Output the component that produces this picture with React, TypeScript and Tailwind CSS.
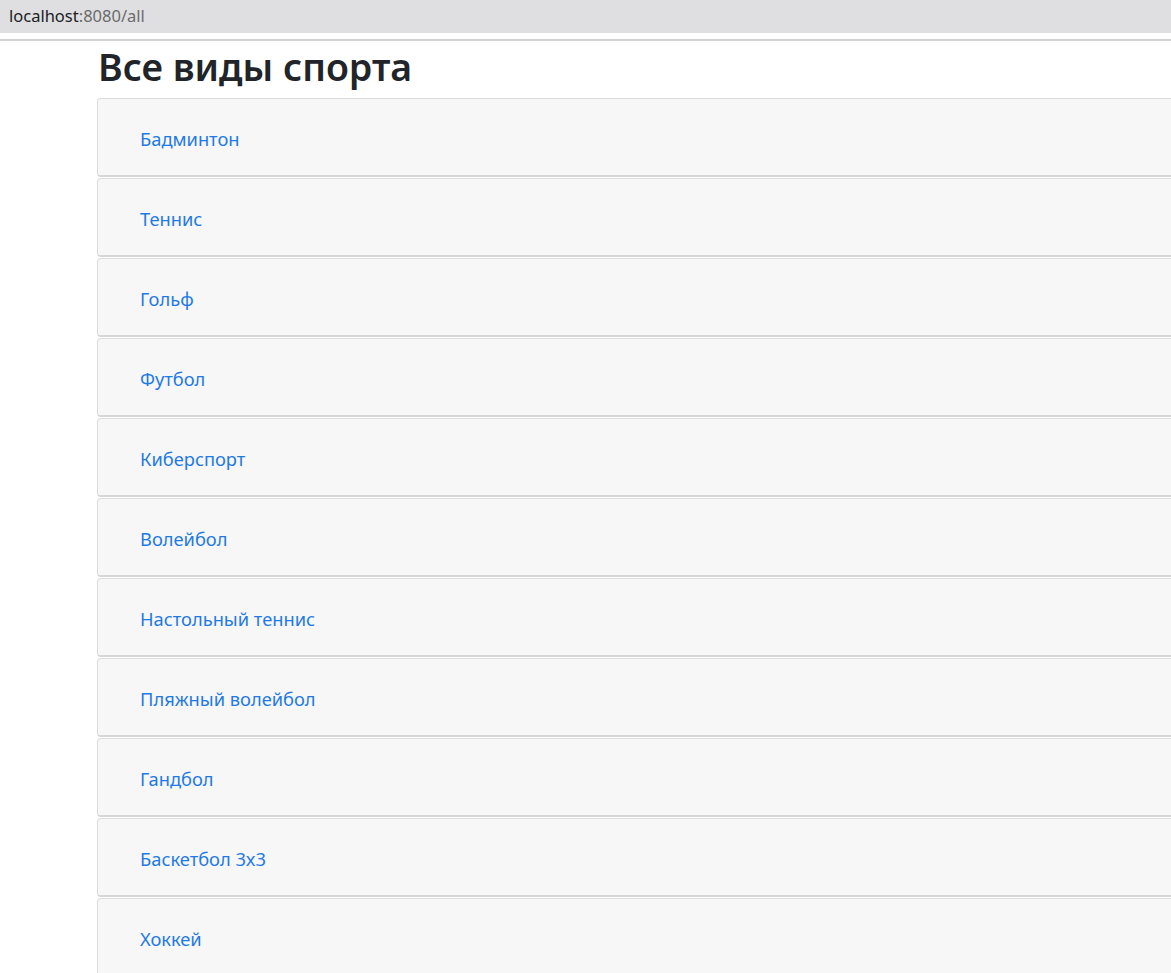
import React from "react";

const sports = [
  "Бадминтон",
  "Теннис",
  "Гольф",
  "Футбол",
  "Киберспорт",
  "Волейбол",
  "Настольный теннис",
  "Пляжный волейбол",
  "Гандбол",
  "Баскетбол 3x3",
  "Хоккей",
];

const App = () => {
  return (
    <div className="min-h-screen bg-white overflow-hidden" style={{ fontFamily: '"Noto Sans", "Open Sans", sans-serif' }}>
      <div className="h-[33px] bg-[#dfdfe1] flex items-center pl-[9px] text-[16.5px]">
        <span className="text-[#202124]">localhost</span>
        <span className="text-[#6b6b6b]">:8080/all</span>
      </div>
      <div className="h-[6px]" />
      <div className="h-[2px] bg-[#d2d2d2]" />
      <div className="pl-[97px]">
        <h1 className="text-[37.5px] font-semibold text-[#212529] leading-[51px] pb-[6px] pl-[1px]">Все виды спорта</h1>
        <div className="w-[1140px] flex flex-col gap-[1px]">
          {sports.map((name) => (
            <div
              key={name}
              className="h-[79px] bg-[#f7f7f7] border border-[#dcdcdc] border-b-2 border-b-[#d6d6d6] rounded-[4px] flex items-center pl-[42px] pt-[3px]"
            >
              <a href="#" className="text-[18.3px] text-[#1f7ae6]">
                {name}
              </a>
            </div>
          ))}
        </div>
      </div>
    </div>
  );
};

export default App;
